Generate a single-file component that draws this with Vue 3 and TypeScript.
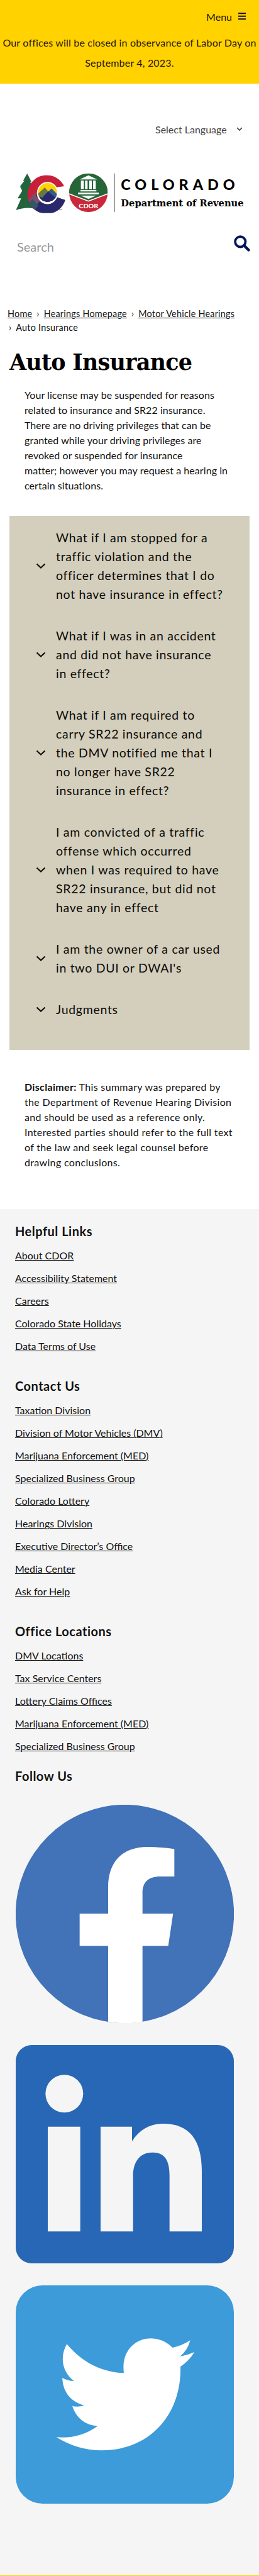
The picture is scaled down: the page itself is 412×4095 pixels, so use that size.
<script setup lang="ts">
interface LinkGroup {
  title: string
  links: string[]
}

const intro: string[] = [
  'Your license may be suspended for reasons',
  'related to insurance and SR22 insurance.',
  'There are no driving privileges that can be',
  'granted while your driving privileges are',
  'revoked or suspended for insurance',
  'matter; however you may request a hearing in',
  'certain situations.',
]

const questions: string[][] = [
  ['What if I am stopped for a', 'traffic violation and the', 'officer determines that I do', 'not have insurance in effect?'],
  ['What if I was in an accident', 'and did not have insurance', 'in effect?'],
  ['What if I am required to', 'carry SR22 insurance and', 'the DMV notified me that I', 'no longer have SR22', 'insurance in effect?'],
  ['I am convicted of a traffic', 'offense which occurred', 'when I was required to have', 'SR22 insurance, but did not', 'have any in effect'],
  ['I am the owner of a car used', "in two DUI or DWAI's"],
  ['Judgments'],
]

const disclaimer: string[] = [
  'the Department of Revenue Hearing Division',
  'and should be used as a reference only.',
  'Interested parties should refer to the full text',
  'of the law and seek legal counsel before',
  'drawing conclusions.',
]

const groups: LinkGroup[] = [
  {
    title: 'Helpful Links',
    links: ['About CDOR', 'Accessibility Statement', 'Careers', 'Colorado State Holidays', 'Data Terms of Use'],
  },
  {
    title: 'Contact Us',
    links: [
      'Taxation Division',
      'Division of Motor Vehicles (DMV)',
      'Marijuana Enforcement (MED)',
      'Specialized Business Group',
      'Colorado Lottery',
      'Hearings Division',
      'Executive Director’s Office',
      'Media Center',
      'Ask for Help',
    ],
  },
  {
    title: 'Office Locations',
    links: ['DMV Locations', 'Tax Service Centers', 'Lottery Claims Offices', 'Marijuana Enforcement (MED)', 'Specialized Business Group'],
  },
]
</script>

<template>
  <div class="page">
    <header class="banner">
      <div class="menu">
        <span>Menu</span>
        <svg width="12" height="12" viewBox="0 0 12 12" aria-hidden="true">
          <path d="M0 1.2h12M0 5.7h12M0 10.2h12" stroke="#1a0d33" stroke-width="2" />
        </svg>
      </div>
      <p class="notice">
        <span class="line">Our offices will be closed in observance of Labor Day on</span>
        <span class="line">September 4, 2023.</span>
      </p>
    </header>

    <div class="language">
      <span>Select Language</span>
      <svg width="10" height="7" viewBox="0 0 10 7" fill="none" aria-hidden="true">
        <path d="M1 1l4 4 4-4" stroke="#444" stroke-width="1.7" />
      </svg>
    </div>

    <svg class="logo" viewBox="72 105 1101 204" role="img" aria-label="Colorado Department of Revenue">
      <defs>
        <clipPath id="seal"><circle cx="422" cy="205" r="92" /></clipPath>
        <clipPath id="peak"><circle cx="227" cy="204" r="45" /></clipPath>
        <clipPath id="cshape"><path d="M306 174A92 92 0 1 0 311 240L273 227A50 50 0 1 1 266 180Z" /></clipPath>
      </defs>
      <path d="M130 113L150 153 143 152 162 182 152 180 170 205V282Q125 270 76 288L101 232H84L106 196 95 175 106 176 96 174 117 147 110 148Z" fill="#22643c" />
      <g clip-path="url(#cshape)">
        <rect x="130" y="110" width="185" height="190" fill="#c7203b" />
        <path d="M125 262L185 205 205 240 320 215V302H125Z" fill="#28296d" />
        <path d="M130 262L150 224 164 207 190 246 155 282Z" fill="#76516d" />
        <path d="M130 262L155 235 184 266 168 284Z" fill="#375368" />
      </g>
      <circle cx="227" cy="204" r="50" fill="#fff" />
      <g clip-path="url(#peak)">
        <rect x="180" y="158" width="94" height="94" fill="#ffd400" />
        <path d="M174 216L214 180 232 202 246 186 276 216V254H174Z" fill="#6a7740" />
        <path d="M211 216L246 185 276 216V254H180Z" fill="#315b92" />
        <path d="M178 237L190 223 202 230 230 198 252 219 275 235V255H178Z" fill="#29286e" />
      </g>
      <text x="278" y="295" font-size="12" font-weight="700" fill="#555" textLength="20" lengthAdjust="spacingAndGlyphs">™</text>
      <g clip-path="url(#seal)">
        <rect x="330" y="113" width="184" height="184" fill="#c9283a" />
        <path d="M330 112H514V211L422 246 330 211Z" fill="#246638" />
        <path d="M326 209L422 245 518 209" fill="none" stroke="#fff" stroke-width="5" />
        <path d="M422 122L464 142H380ZM386 147H400V188H386ZM406 147H418V188H406ZM426 147H438V188H426ZM444 147H457V188H444ZM384 192H460V199H384ZM372 205H471V213H372ZM385 219H459L422 235Z" fill="#fff" />
        <text x="376" y="279" font-size="29" font-weight="900" fill="#fff" textLength="93" lengthAdjust="spacingAndGlyphs">CDOR</text>
      </g>
      <path d="M546 113V297" stroke="#777" stroke-width="4" />
      <text x="577" y="192" font-size="70" font-weight="900" textLength="544" lengthAdjust="spacing">COLORADO</text>
      <text class="slab" x="577" y="271" font-size="43" font-weight="700" textLength="586" lengthAdjust="spacingAndGlyphs">Department of Revenue</text>
    </svg>

    <div class="search">
      <span>Search</span>
      <svg width="26" height="26" viewBox="0 0 26 26" fill="none" stroke="#00165c" aria-hidden="true">
        <circle cx="10.3" cy="10.3" r="8.2" stroke-width="3.8" />
        <path d="M16 16l7.5 7.5" stroke-width="4.4" stroke-linecap="round" />
      </svg>
    </div>

    <nav class="crumbs">
      <div class="line"><a>Home</a><i>›</i><a>Hearings Homepage</a><i>›</i><a>Motor Vehicle Hearings</a></div>
      <div class="line last"><i>›</i><span>Auto Insurance</span></div>
    </nav>

    <main>
      <h1>Auto Insurance</h1>
      <p class="copy">
        <span v-for="line in intro" :key="line" class="line">{{ line }}</span>
      </p>

      <section class="accordion">
        <div v-for="(question, index) in questions" :key="index" class="question">
          <svg width="16" height="10" viewBox="0 0 16 10" fill="none" aria-hidden="true">
            <path d="M1.5 1.5L8 7.6l6.500-6.100" stroke="#0b0b05" stroke-width="2" />
          </svg>
          <div>
            <span v-for="line in question" :key="line" class="line">{{ line }}</span>
          </div>
        </div>
      </section>

      <p class="copy disclaimer">
        <span class="line"><b>Disclaimer:</b> This summary was prepared by</span>
        <span v-for="line in disclaimer" :key="line" class="line">{{ line }}</span>
      </p>
    </main>

    <footer>
      <section v-for="group in groups" :key="group.title" class="group">
        <h2>{{ group.title }}</h2>
        <ul>
          <li v-for="link in group.links" :key="link"><a>{{ link }}</a></li>
        </ul>
      </section>
      <h2 class="follow">Follow Us</h2>
      <div class="social">
        <svg viewBox="75 60 1041 1041" role="img" aria-label="Facebook">
          <circle cx="595.500" cy="580.500" r="521" fill="#4272b8" />
          <path d="M516 1094V733H380V579H516V455C516 330 585 261 705 261Q770 262 832 271V402H765C707 402 680 430 680 480V579H826L803 733H680V1094Q598 1110 516 1094Z" fill="#fff" />
        </svg>
        <svg viewBox="75 66 1041 1041" role="img" aria-label="LinkedIn">
          <rect x="75" y="66" width="1041" height="1041" rx="76" fill="#2867b5" />
          <g fill="#f5f5f5">
            <circle cx="307" cy="298" r="90" />
            <path d="M228 455H383V955H228ZM480 455H630V525C665 470 715 441 780 441C900 441 963 515 963 665V955H809V690C809 615 785 578 728 578C665 578 635 625 635 690V955H480Z" />
          </g>
        </svg>
        <svg viewBox="75 72 1041 1041" role="img" aria-label="Twitter">
          <rect x="75" y="72" width="1041" height="1041" rx="128" fill="#3d9bd9" />
          <path d="M319 352C390 437 483 487 591 490C578 390 640 325 722 325Q779 325 823 369Q868 360 908 334Q895 382 859 411Q895 405 928 390Q903 431 861 460C868 675 725 859 485 859Q370 859 269 796Q380 805 465 743Q375 735 345 648Q374 653 401 645Q302 615 297 514Q325 528 353 528C298 486 283 415 319 352Z" fill="#fff" />
        </svg>
      </div>
    </footer>
  </div>
</template>

<style>
body {
  margin: 0;
  background: #fff;
}
</style>

<style scoped>
.page {
  width: 412px;
  height: 4095px;
  box-sizing: border-box;
  overflow: hidden;
  border-bottom: 1px solid #ffd200;
  color: #111;
  font-family: Lato, "Open Sans", sans-serif;
  font-size: 16px;
}
.line {
  display: block;
  white-space: nowrap;
}
p,
h1,
h2,
ul {
  margin: 0;
  padding: 0;
}
a {
  text-decoration: underline;
  text-decoration-thickness: 1px;
  text-underline-offset: 1px;
}
.banner {
  height: 133px;
  background: #ffd200;
  color: #28150a;
}
.menu {
  display: flex;
  align-items: center;
  justify-content: flex-end;
  gap: 10px;
  height: 52px;
  padding-right: 21px;
}
.notice {
  line-height: 32px;
  letter-spacing: 0.18px;
  text-align: center;
}
.language {
  display: flex;
  align-items: center;
  gap: 15px;
  height: 22px;
  margin-top: 61px;
  padding-left: 247px;
  color: #444;
}
.logo {
  display: block;
  width: 367px;
  height: 68px;
  margin: 57px 0 0 24px;
  font-family: Lato, sans-serif;
}
.slab,
h1 {
  font-family: "DejaVu Serif", serif;
}
.search {
  display: flex;
  justify-content: space-between;
  height: 26px;
  margin: 33px 14px 0 27px;
  color: #999;
  font-size: 20px;
}
.search span {
  padding-top: 6px;
}
.crumbs {
  margin-top: 88px;
  padding-left: 12px;
  font-size: 14.400px;
  letter-spacing: 0.24px;
  line-height: 22px;
}
.crumbs i {
  padding: 0 7px;
  font-style: normal;
}
.crumbs .last i {
  padding: 0 7px 0 2px;
}
h1 {
  margin-top: 16px;
  padding-left: 15px;
  font-size: 35px;
  font-weight: 700;
  letter-spacing: -0.8px;
  line-height: 56px;
  color: #000;
  white-space: nowrap;
}
.copy {
  margin-top: 12px;
  padding-left: 39px;
  letter-spacing: 0.06px;
  line-height: 24px;
}
.accordion {
  display: flex;
  flex-direction: column;
  gap: 36px;
  box-sizing: border-box;
  height: 849px;
  margin: 36px 15px 0;
  padding: 20px 0 0 42px;
  background: #d4cebd;
  color: #0b0b05;
  font-size: 19.500px;
  letter-spacing: 0.7px;
  line-height: 30px;
}
.question {
  display: flex;
  align-items: center;
  gap: 16px;
}
.disclaimer {
  margin-top: 47px;
  letter-spacing: 0.33px;
}
footer {
  height: 2172px;
  box-sizing: border-box;
  margin-top: 62px;
  padding: 17px 0 0 24px;
  background: #f5f5f5;
}
h2 {
  font-size: 20px;
  font-weight: 700;
  letter-spacing: 0.5px;
  line-height: 36px;
}
ul {
  padding-top: 3px;
  list-style: none;
}
li {
  line-height: 36px;
}
.group + .group {
  margin-top: 27px;
}
.follow {
  margin-top: 11px;
}
.social {
  display: flex;
  flex-direction: column;
  gap: 35px;
  margin-top: 28px;
  padding-left: 1px;
}
.social svg {
  display: block;
  width: 347px;
  height: 347px;
}
</style>
